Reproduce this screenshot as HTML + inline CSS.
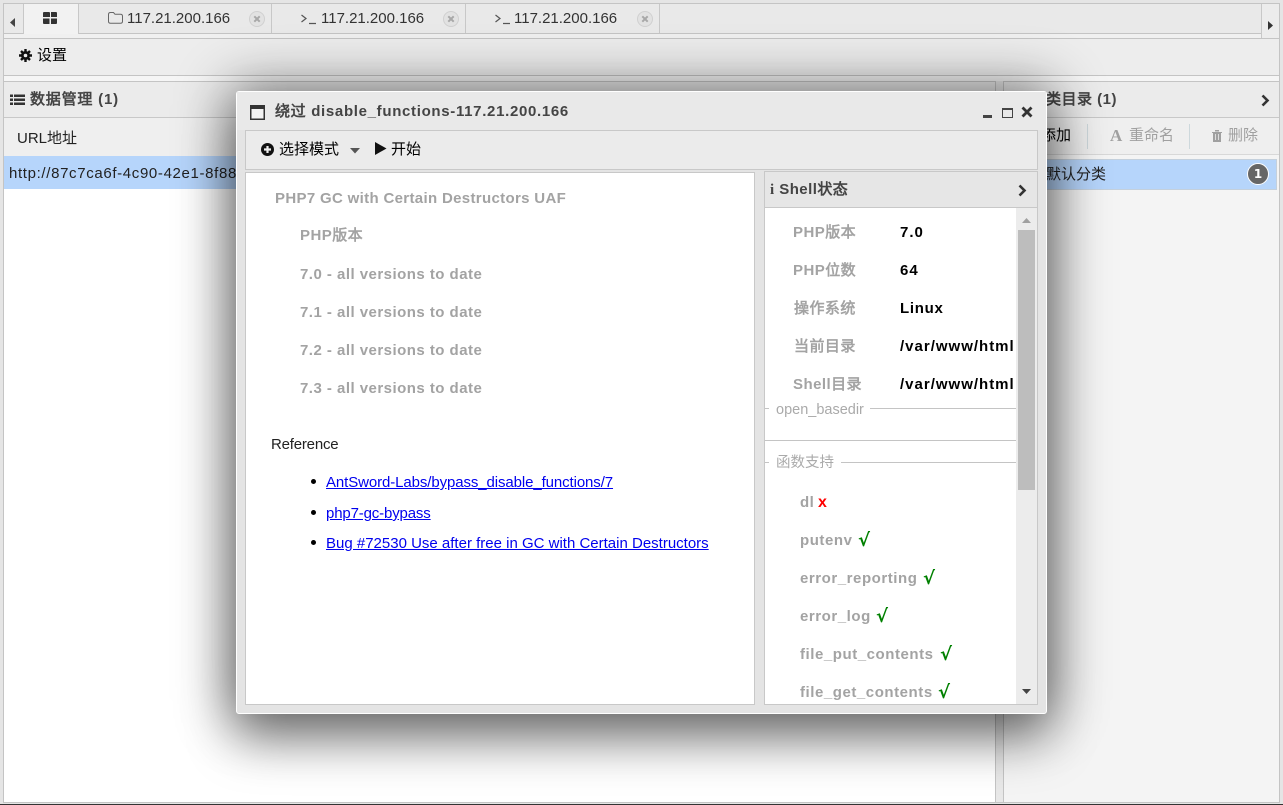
<!DOCTYPE html>
<html><head><meta charset="utf-8"><style>
html,body{margin:0;padding:0;width:1283px;height:805px;overflow:hidden;background:#fff}
body{position:relative;font-family:"Liberation Sans","WenQuanYi Zen Hei","Noto Sans CJK SC",sans-serif;font-size:15px;color:#000}
.b{position:absolute;box-sizing:border-box}
.t{position:absolute;white-space:nowrap;line-height:20px;height:20px}
.h{font-family:"Liberation Sans","WenQuanYi Zen Hei",sans-serif;font-weight:bold;font-size:15px;letter-spacing:.45px}
.g{color:#a3a3a3}
.d{color:#444}
.k{color:#000;letter-spacing:1px}
.f{letter-spacing:.62px}
.ok{color:#008000;font-size:18px;font-weight:bold;font-family:"DejaVu Sans",sans-serif}
a{color:#00e;text-decoration:underline}
svg{position:absolute;overflow:visible}
</style></head><body>
<div class="b" style="left:0;top:0;width:1283px;height:805px;background:#e5e5e5"></div>
<div class="b" style="top:3px;left:3px;width:1277px;height:800px;background:#f5f5f5;border:1px solid #c4c4c4"></div>
<!-- tabs -->
<div class="b" style="left:4px;top:4px;width:1257px;height:30px;background:#e9e9e9;border-bottom:1px solid #c4c4c4"></div>
<div class="b" style="left:4px;top:34px;width:1275px;height:5px;background:#f0f0f0;border-bottom:1px solid #c4c4c4"></div>
<div class="b" style="left:23px;top:4px;width:56px;height:30px;background:#f2f2f2;border-left:1px solid #c8c8c8;border-right:1px solid #c8c8c8"></div>
<div class="b" style="left:271px;top:4px;width:1px;height:29px;background:#c8c8c8"></div>
<div class="b" style="left:465px;top:4px;width:1px;height:29px;background:#c8c8c8"></div>
<div class="b" style="left:659px;top:4px;width:1px;height:29px;background:#c8c8c8"></div>
<div class="b" style="left:1261px;top:4px;width:18px;height:34px;background:#ececec;border-left:1px solid #c8c8c8"></div>
<svg style="left:10px;top:18px" width="6" height="10"><path d="M5 0V9L0 4.500Z" fill="#444"/></svg>
<svg style="left:1268px;top:21px" width="6" height="10"><path d="M0 0V9L5 4.500Z" fill="#333"/></svg>
<svg style="left:43px;top:12px" width="14" height="13"><path d="M1 0h5q1 0 1 1v4h-7v-4q0-1 1-1zM8 0h5q1 0 1 1v4h-6zM0 6.500h6.500v5.500h-5.500q-1 0-1-1zM8 6.500h6v4.500q0 1-1 1h-5z" fill="#333"/></svg>
<svg style="left:108px;top:12px" width="15" height="12"><path d="M.5 2.500q0-2 2-2h3l1.500 1.800h5.500q2 0 2 2v5q0 2-2 2h-10q-2 0-2-2z" fill="none" stroke="#666"/></svg>
<div class="t" style="left:127px;top:9px;color:#333">117.21.200.166</div>
<svg style="left:301px;top:14px" width="16" height="11"><path d="M.5 1L5 4.500L.5 8M8 9.500h7" fill="none" stroke="#555" stroke-width="1.200"/></svg>
<div class="t" style="left:321px;top:9px;color:#333">117.21.200.166</div>
<svg style="left:495px;top:14px" width="16" height="11"><path d="M.5 1L5 4.500L.5 8M8 9.500h7" fill="none" stroke="#555" stroke-width="1.200"/></svg>
<div class="t" style="left:514px;top:9px;color:#333">117.21.200.166</div>
<svg style="left:249px;top:11px" width="16" height="16"><circle cx="8" cy="8" r="7.500" fill="#e2e2e2" stroke="#d0d0d0"/><path d="M5.300 5.300L10.700 10.700M10.700 5.300L5.300 10.700" stroke="#a8a8a8" stroke-width="2"/></svg>
<svg style="left:443px;top:11px" width="16" height="16"><circle cx="8" cy="8" r="7.500" fill="#e2e2e2" stroke="#d0d0d0"/><path d="M5.300 5.300L10.700 10.700M10.700 5.300L5.300 10.700" stroke="#a8a8a8" stroke-width="2"/></svg>
<svg style="left:637px;top:11px" width="16" height="16"><circle cx="8" cy="8" r="7.500" fill="#e2e2e2" stroke="#d0d0d0"/><path d="M5.300 5.300L10.700 10.700M10.700 5.300L5.300 10.700" stroke="#a8a8a8" stroke-width="2"/></svg>
<!-- settings toolbar -->
<div class="b" style="left:4px;top:39px;width:1275px;height:37px;background:#ededed;border-bottom:1px solid #c4c4c4"></div>
<svg style="left:19px;top:49px" width="13" height="13"><circle cx="6.500" cy="6.500" r="4.500" fill="#111"/><path d="M6.500 0v13M0 6.500h13M2 2l9 9M11 2l-9 9" stroke="#111" stroke-width="2.400"/><circle cx="6.500" cy="6.500" r="1.800" fill="#eee"/></svg>
<div class="t" style="left:37px;top:46px">设置</div>
<!-- left panel -->
<div class="b" style="left:4px;top:81px;width:992px;height:721px;background:#fff;border-top:1px solid #c4c4c4;border-right:1px solid #c4c4c4"></div>
<div class="b" style="left:4px;top:82px;width:991px;height:36px;background:#ebebeb;border-bottom:1px solid #c8c8c8"></div>
<div class="b" style="left:4px;top:118px;width:991px;height:38px;background:#efefef"></div>
<div class="b" style="left:4px;top:156px;width:991px;height:33px;background:#b6d5fb"></div>
<svg style="left:10px;top:94px" width="15" height="12"><path d="M0 .5h3v2.500h-3zM0 4.500h3v2.500h-3zM0 8.500h3v2.500h-3zM4 .5h11v2.500h-11zM4 4.500h11v2.500h-11zM4 8.500h11v2.500h-11z" fill="#333"/></svg>
<div class="t h d" style="left:30px;top:90px;letter-spacing:.8px">数据管理 (1)</div>
<div class="t" style="left:17px;top:129px;color:#222">URL地址</div>
<div class="t" style="left:9px;top:164px;color:#222;letter-spacing:.65px;width:227px;overflow:hidden">http://87c7ca6f-4c90-42e1-8f88</div>
<!-- splitter -->
<div class="b" style="left:996px;top:81px;width:7px;height:721px;background:#e8e8e8"></div>
<!-- right panel -->
<div class="b" style="left:1003px;top:81px;width:276px;height:721px;background:#f4f4f4;border-top:1px solid #c4c4c4;border-left:1px solid #c4c4c4"></div>
<div class="b" style="left:1004px;top:82px;width:275px;height:36px;background:#ebebeb;border-bottom:1px solid #c8c8c8"></div>
<div class="b" style="left:1004px;top:118px;width:275px;height:37px;background:#efefef;border-bottom:1px solid #d8d8d8"></div>
<div class="b" style="left:1004px;top:159px;width:273px;height:31px;background:#b6d5fb;border:1px solid #c4d0dc"></div>
<div class="t h d" style="left:1046px;top:90px;letter-spacing:.5px">类目录 (1)</div>
<svg style="left:1261px;top:94px" width="9" height="13"><path d="M1.500 1.500L6.500 6.500L1.500 11.500" fill="none" stroke="#333" stroke-width="2.600"/></svg>
<div class="t" style="left:1041px;top:126px">添加</div>
<div class="b" style="left:1087px;top:124px;width:1px;height:25px;background:#cdd8dc"></div>
<div class="t" style="left:1110px;top:126px;color:#a0a0a0;font-family:'Liberation Serif';font-weight:bold;font-size:17px">A</div>
<div class="t" style="left:1129px;top:126px;color:#a0a0a0">重命名</div>
<div class="b" style="left:1189px;top:124px;width:1px;height:25px;background:#cdd8dc"></div>
<svg style="left:1211px;top:129px" width="12" height="13"><path d="M1 3h10v1h-1v9h-8v-9h-1zM4 1h4v1.500h-4z" fill="#a0a0a0"/><path d="M4.500 5v6M7.500 5v6" stroke="#ddd"/></svg>
<div class="t" style="left:1228px;top:126px;color:#a0a0a0">删除</div>
<div class="t" style="left:1046px;top:165px;color:#222">默认分类</div>
<div class="b" style="left:1247px;top:163px;width:22px;height:22px;border-radius:50%;background:#666;border:1px solid #fff"></div>
<div class="t" style="left:1247px;top:164px;width:22px;text-align:center;color:#fff;font:bold 12px/20px 'DejaVu Sans'">1</div>
<!-- popup -->
<div class="b" style="left:236px;top:91px;width:811px;height:623px;background:#e4e4e4;border:1px solid #fff;border-radius:3px;box-shadow:0 0 55px 6px rgba(0,0,0,.45),0 26px 50px rgba(0,0,0,.38)"></div>
<div class="b" style="left:237px;top:92px;width:809px;height:38px;background:#e9e9e9"></div>
<svg style="left:250px;top:105px" width="15" height="15"><rect x=".75" y=".75" width="13.500" height="13.500" fill="#f2f2f2" stroke="#333" stroke-width="1.500"/><rect x="0" y="0" width="15" height="4" fill="#333"/></svg>
<div class="t h d" style="left:275px;top:102px;letter-spacing:.68px">绕过 disable_functions-117.21.200.166</div>
<div class="b" style="left:983px;top:115px;width:9px;height:3px;background:#444"></div>
<div class="b" style="left:1002px;top:108px;width:11px;height:10px;border:1.500px solid #444;border-top-width:2.500px"></div>
<svg style="left:1021px;top:106px" width="12" height="12"><path d="M1.500 1.500L10.500 10.500M10.500 1.500L1.500 10.500" stroke="#333" stroke-width="2.800"/></svg>
<!-- popup toolbar -->
<div class="b" style="left:245px;top:130px;width:793px;height:40px;background:#ebebeb;border:1px solid #c8c8c8"></div>
<svg style="left:261px;top:143px" width="13" height="13"><circle cx="6.500" cy="6.500" r="6.500" fill="#111"/><path d="M6.500 3v7M3 6.500h7" stroke="#eee" stroke-width="2.200"/></svg>
<div class="t" style="left:279px;top:140px">选择模式</div>
<svg style="left:350px;top:148px" width="11" height="6"><path d="M0 0h10L5 5.500Z" fill="#555"/></svg>
<svg style="left:375px;top:142px" width="12" height="13"><path d="M0 0L11.500 6.500L0 13Z" fill="#111"/></svg>
<div class="t" style="left:391px;top:140px">开始</div>
<!-- popup left content -->
<div class="b" style="left:245px;top:172px;width:510px;height:533px;background:#fff;border:1px solid #c8c8c8"></div>
<div class="t h g" style="left:275px;top:189px;letter-spacing:.33px">PHP7 GC with Certain Destructors UAF</div>
<div class="t h g" style="left:300px;top:226px">PHP版本</div>
<div class="t h g" style="left:300px;top:265px;letter-spacing:.47px">7.0 - all versions to date</div>
<div class="t h g" style="left:300px;top:303px;letter-spacing:.47px">7.1 - all versions to date</div>
<div class="t h g" style="left:300px;top:341px;letter-spacing:.47px">7.2 - all versions to date</div>
<div class="t h g" style="left:300px;top:379px;letter-spacing:.47px">7.3 - all versions to date</div>
<div class="t" style="left:271px;top:435px;color:#222;letter-spacing:-.2px">Reference</div>
<div class="b" style="left:311px;top:479px;width:5px;height:5px;border-radius:50%;background:#000"></div>
<div class="b" style="left:311px;top:510px;width:5px;height:5px;border-radius:50%;background:#000"></div>
<div class="b" style="left:311px;top:540px;width:5px;height:5px;border-radius:50%;background:#000"></div>
<a class="t" style="left:326px;top:473px;letter-spacing:-.1px">AntSword-Labs/bypass_disable_functions/7</a>
<a class="t" style="left:326px;top:504px;letter-spacing:-.15px">php7-gc-bypass</a>
<a class="t" style="left:326px;top:534px">Bug #72530 Use after free in GC with Certain Destructors</a>
<!-- shell panel -->
<div class="b" style="left:764px;top:171px;width:274px;height:37px;background:#e6e6e6;border:1px solid #c8c8c8"></div>
<div class="b" style="left:764px;top:208px;width:274px;height:497px;background:#fff;border:1px solid #c8c8c8;border-top:0"></div>
<div class="t h d" style="left:770px;top:180px"><span style="font-family:'Liberation Serif'">i</span> Shell状态</div>
<svg style="left:1018px;top:184px" width="9" height="13"><path d="M1.500 1.500L6.500 6.500L1.500 11.500" fill="none" stroke="#333" stroke-width="2.600"/></svg>
<div class="t h g" style="left:793px;top:223px">PHP版本</div><div class="t h k" style="left:900px;top:223px">7.0</div>
<div class="t h g" style="left:793px;top:261px">PHP位数</div><div class="t h k" style="left:900px;top:261px">64</div>
<div class="t h g" style="left:794px;top:299px">操作系统</div><div class="t h k" style="left:900px;top:299px;letter-spacing:.7px">Linux</div>
<div class="t h g" style="left:794px;top:337px">当前目录</div><div class="t h k" style="left:900px;top:337px;width:116px;overflow:hidden">/var/www/html</div>
<div class="t h g" style="left:793px;top:375px">Shell目录</div><div class="t h k" style="left:900px;top:375px;width:116px;overflow:hidden">/var/www/html</div>
<div class="b" style="left:765px;top:408px;width:4px;height:1px;background:#c4c4c4"></div>
<div class="b" style="left:870px;top:408px;width:146px;height:1px;background:#c4c4c4"></div>
<div class="b" style="left:765px;top:440px;width:251px;height:1px;background:#c4c4c4"></div>
<div class="t" style="left:776px;top:400px;color:#aaa;font-size:14.500px">open_basedir</div>
<div class="b" style="left:765px;top:462px;width:4px;height:1px;background:#c4c4c4"></div>
<div class="b" style="left:841px;top:462px;width:175px;height:1px;background:#c4c4c4"></div>
<div class="t" style="left:776px;top:453px;color:#aaa;font-size:14.500px">函数支持</div>
<div class="t h g" style="left:800px;top:493px">dl</div><div class="t h" style="left:818px;top:493px;color:#f00;font-size:16px">x</div>
<div class="t h g f" style="left:800px;top:531px;letter-spacing:.55px">putenv</div><div class="t ok" style="left:858px;top:531px">√</div>
<div class="t h g f" style="left:800px;top:569px;letter-spacing:.55px">error_reporting</div><div class="t ok" style="left:923px;top:569px">√</div>
<div class="t h g f" style="left:800px;top:607px;letter-spacing:.55px">error_log</div><div class="t ok" style="left:876px;top:607px">√</div>
<div class="t h g f" style="left:800px;top:645px;letter-spacing:.55px">file_put_contents</div><div class="t ok" style="left:940px;top:645px">√</div>
<div class="t h g f" style="left:800px;top:683px;letter-spacing:.55px">file_get_contents</div><div class="t ok" style="left:938px;top:683px">√</div>
<!-- scrollbar -->
<div class="b" style="left:1016px;top:208px;width:21px;height:496px;background:#ececec"></div>
<div class="b" style="left:1018px;top:230px;width:17px;height:260px;background:#bdbdbd"></div>
<svg style="left:1022px;top:218px" width="9" height="5"><path d="M0 5L4.500 0L9 5Z" fill="#a0a0a0"/></svg>
<svg style="left:1022px;top:689px" width="9" height="5"><path d="M0 0L4.500 5L9 0Z" fill="#444"/></svg>
<div class="b" style="left:0;top:804px;width:1283px;height:1px;background:#333"></div>
</body></html>
